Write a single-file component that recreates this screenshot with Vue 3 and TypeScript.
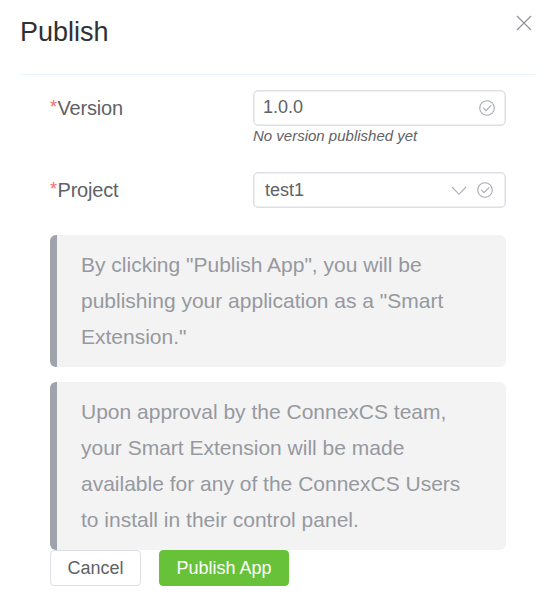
<script setup lang="ts">
import { ref } from 'vue'

const version = ref('1.0.0')
const project = ref('test1')
</script>

<template>
  <main class="dialog">
    <header class="header">
      <h1>Publish</h1>
      <button class="close" aria-label="Close">
        <svg viewBox="0 0 16 16"><path d="M1 1L15 15M15 1L1 15" /></svg>
      </button>
    </header>
    <form class="body" @submit.prevent>
      <div class="row">
        <label><i>*</i>Version</label>
        <div class="field">
          <div class="input text">
            <span class="value">{{ version }}</span>
            <svg class="check" viewBox="0 0 16 16"><circle cx="8" cy="8" r="7.3" /><path d="M4.1 7.7L7 10.6L12.2 5.4" /></svg>
          </div>
          <small>No version published yet</small>
        </div>
      </div>
      <div class="row project">
        <label><i>*</i>Project</label>
        <div class="field">
          <div class="input select">
            <span class="value">{{ project }}</span>
            <svg class="arrow" viewBox="0 0 16 10"><path d="M1 1L8 8.3L15 1" /></svg>
            <svg class="check" viewBox="0 0 16 16"><circle cx="8" cy="8" r="7.3" /><path d="M4.1 7.7L7 10.6L12.2 5.4" /></svg>
          </div>
        </div>
      </div>
      <p class="note">By clicking "Publish App", you will be<br>publishing your application as a "Smart<br>Extension."</p>
      <p class="note second">Upon approval by the ConnexCS team,<br>your Smart Extension will be made<br>available for any of the ConnexCS Users<br>to install in their control panel.</p>
      <div class="actions">
        <button class="btn cancel">Cancel</button>
        <button class="btn primary">Publish App</button>
      </div>
    </form>
  </main>
</template>

<style>
body { background: #fff; overflow: hidden; }
</style>

<style scoped>
* { box-sizing: border-box; }
.dialog { width: 544px; height: 597px; font-family: "Liberation Sans", Arial, sans-serif; color: #606266; background: #fff; }
.header { height: 75px; margin: 0 8px 0 20px; padding-top: 15px; border-bottom: 1px solid #ebf5fd; display: flex; justify-content: space-between; align-items: flex-start; }
h1 { margin: 0; font-size: 27px; line-height: 34px; font-weight: 400; color: #303133; }
button { font-family: inherit; }
.close { width: 16px; height: 16px; padding: 0; margin-right: 4px; border: 0; background: none; }
svg { display: block; fill: none; stroke: #a8abb2; stroke-width: 1.1; flex: none; }
.close svg { width: 16px; height: 16px; stroke: #909399; stroke-width: 1.2; }
.body { padding: 15px 38px 0 50px; }
.row { display: flex; height: 82px; }
.row.project { height: 63px; }
label { display: flex; width: 203px; font-size: 20px; line-height: 36px; letter-spacing: -0.2px; }
label i { width: 7.5px; line-height: 34px; font-style: normal; color: #f56c6c; font-size: 18px; }
.field { width: 253px; }
.input { height: 36px; border: 1px solid #dcdfe6; border-radius: 5px; box-shadow: inset 0 0 0 0.5px #dcdfe6; padding: 0 10px; display: flex; align-items: center; font-size: 18px; }
.value { flex: 1; line-height: 34px; }
.text { padding-left: 9px; }
.text .value { padding-bottom: 2px; line-height: 32px; }
.select { padding: 0 12px 0 11px; }
.check { width: 16px; height: 16px; }
.arrow { width: 16px; height: 10px; margin: 2px 10px 0 0; }
small { display: block; font-size: 15px; line-height: 20px; font-style: italic; }
.note { margin: 0; padding: 12px 0 12px 24px; border-left: 7px solid #9fa3ab; border-radius: 6px; background: #f3f3f3; color: #96999f; font-size: 21px; line-height: 36px; }
.second { margin-top: 15px; }
.actions { display: flex; gap: 18px; }
.btn { height: 36px; padding: 0; border: 1px solid #dcdfe6; border-radius: 4px; background: #fff; font-size: 18px; color: #606266; }
.cancel { width: 91px; }
.primary { width: 130px; color: #fff; background: #67c23a; border-color: #67c23a; }
</style>
